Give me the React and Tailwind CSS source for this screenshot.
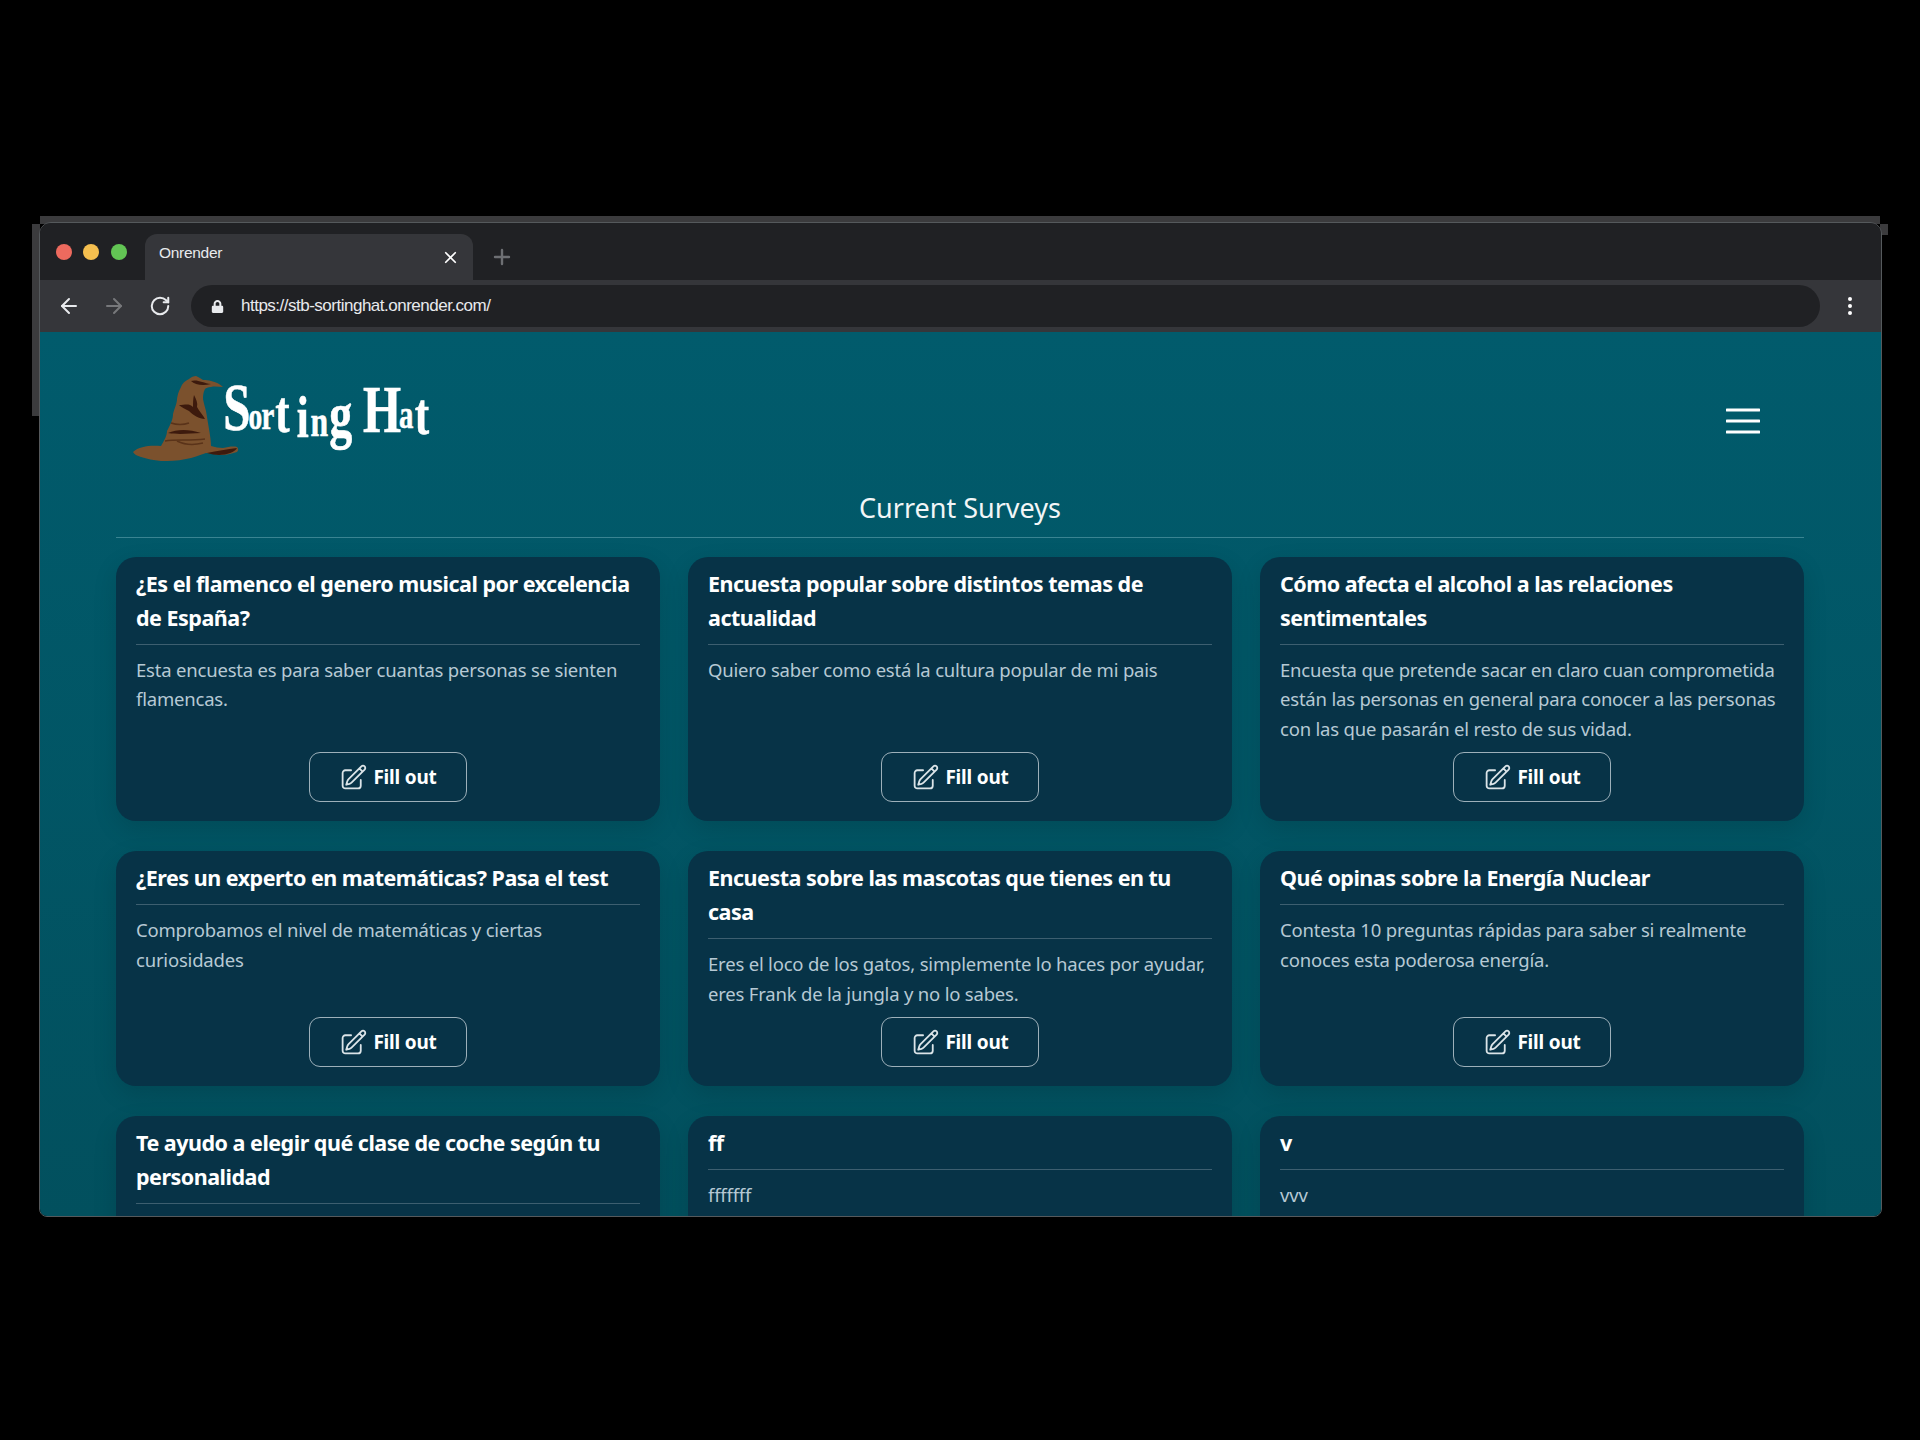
import { ArrowLeft, ArrowRight, RotateCw, X, Plus } from 'lucide-react';
import { FaLock } from 'react-icons/fa';
import { HiOutlinePencilSquare } from 'react-icons/hi2';

const surveys = [
  { title: '¿Es el flamenco el genero musical por excelencia de España?', text: 'Esta encuesta es para saber cuantas personas se sienten flamencas.' },
  { title: 'Encuesta popular sobre distintos temas de actualidad', text: 'Quiero saber como está la cultura popular de mi pais' },
  { title: 'Cómo afecta el alcohol a las relaciones sentimentales', text: 'Encuesta que pretende sacar en claro cuan comprometida están las personas en general para conocer a las personas con las que pasarán el resto de sus vidad.' },
  { title: '¿Eres un experto en matemáticas? Pasa el test', text: 'Comprobamos el nivel de matemáticas y ciertas curiosidades' },
  { title: 'Encuesta sobre las mascotas que tienes en tu casa', text: 'Eres el loco de los gatos, simplemente lo haces por ayudar, eres Frank de la jungla y no lo sabes.' },
  { title: 'Qué opinas sobre la Energía Nuclear', text: 'Contesta 10 preguntas rápidas para saber si realmente conoces esta poderosa energía.' },
  { title: 'Te ayudo a elegir qué clase de coche según tu personalidad', text: '' },
  { title: 'ff', text: 'fffffff' },
  { title: 'v', text: 'vvv' },
];

const Logo = () => (
  <svg width="330" height="100" viewBox="18 20 330 100" className="block">
    {/* hat */}
    <path d="M22 103 C28 97 40 96 50 97 C54 90 56 86 56 82 C60 74 62 70 62 65 C64 58 66 54 66 50 C67 44 68 42 70 38 C72 33 76 31 78 30 C80 28 83 27 85 27 C88 28 90 30 92 31 C95 31 98 31 100 32 C105 33 109 35 112 38 C108 38 104 37 100 38 C97 38 95 39 94 40 C92 44 92 47 92 50 C93 55 94 58 95 62 C96 68 97 74 98 80 C99 86 100 92 100 97 C104 98 108 99 112 99 C117 98 122 97 126 98 C128 100 127 102 126 103 C120 105 115 106 110 106 C105 106 100 104 95 104 C88 106 82 109 75 110 C66 112 58 112 50 112 C42 111 36 110 30 108 C26 107 23 105 22 103 Z" fill="#7b512d" />
    <path d="M83 46 C85 50 87 54 86 58 C88 62 92 66 94 70 C88 70 82 66 78 62 C74 60 70 58 68 56 C74 56 78 54 82 58 C82 54 82 50 83 46 Z M57 84 C66 80 78 80 90 84 C80 84 70 86 57 84 Z M96 104 C106 102 116 100 126 99 C124 103 116 106 108 106 C104 106 100 105 96 104 Z M80 32 C86 30 92 34 100 35 C92 37 84 36 80 32 Z" fill="#3d1a0d" />
    <path d="M54 92 C64 90 78 92 94 90 M60 74 C66 76 72 76 78 74 M66 92 C74 96 84 96 92 94" stroke="#5a3319" strokeWidth="1.4" fill="none" />
    {/* wordmark */}
    <text transform="scale(0.72 1)" fontFamily="Liberation Serif, serif" fontWeight="700" fill="#ffffff" stroke="#ffffff" strokeWidth="0.6">
      <tspan x="156" y="81" fontSize="68">S</tspan>
      <tspan x="191" y="80" fontSize="38">o</tspan>
      <tspan x="209" y="80" fontSize="40">r</tspan>
      <tspan x="228" y="83" fontSize="60">t</tspan>
      <tspan x="258" y="88" fontSize="60">i</tspan>
      <tspan x="277" y="87" fontSize="44">n</tspan>
      <tspan x="303" y="87" fontSize="64">g</tspan>
      <tspan x="350" y="83" fontSize="68">H</tspan>
      <tspan x="400" y="79" fontSize="40">a</tspan>
      <tspan x="422" y="85" fontSize="60">t</tspan>
    </text>
  </svg>
);

const SurveyCard = ({ title, text }) => (
  <div className="flex flex-col rounded-[20px] bg-[#073347] px-[20px] pt-[10px] pb-[19px] shadow-[0_8px_24px_rgba(0,0,0,0.12)]">
    <h3 className="border-b border-[#3d5f70] pb-[9px] text-[21.5px] leading-[34px] font-bold tracking-[-0.5px] text-white">{title}</h3>
    <p className="mt-[10px] mb-[9px] min-h-[59px] text-[18.5px] leading-[29.4px] tracking-[-0.2px] text-[#b6c9d4]">{text}</p>
    <button className="mx-auto mt-auto flex h-[50px] w-[158px] items-center justify-center gap-[5px] rounded-[11px] border-[1.5px] border-[#9db0ba] text-[19px] font-bold tracking-[-0.2px] text-white">
      <HiOutlinePencilSquare size={29} className="text-[#dbe4e8]" />
      Fill out
    </button>
  </div>
);

const App = () => (
  <div className="relative h-[1440px] w-[1920px] overflow-hidden bg-black pt-[222px] pl-[39px] font-['Noto_Sans',sans-serif]">
    {/* stray edges of the window capture */}
    <div className="absolute top-[216px] left-[40px] h-[8px] w-[1840px] bg-[#3b3b3d]" />
    <div className="absolute top-[224px] left-[32px] h-[192px] w-[8px] bg-[#3b3b3d]" />
    <div className="absolute top-[224px] left-[1880px] h-[11px] w-[8px] bg-[#3b3b3d]" />

    <div className="relative flex h-[995px] w-[1843px] flex-col overflow-hidden rounded-t-[12px] rounded-b-[8px] border border-[#55595c]">
      {/* tab bar */}
      <div className="flex h-[57px] items-end bg-[#202124] pl-[16px]">
        <div className="flex h-[57px] items-center self-start">
          <span className="h-[16px] w-[16px] rounded-full bg-[#ed6a5e]" />
          <span className="ml-[11px] h-[16px] w-[16px] rounded-full bg-[#f5bf4f]" />
          <span className="ml-[12px] h-[16px] w-[16px] rounded-full bg-[#62c554]" />
        </div>
        <div className="ml-[18px] flex h-[46px] w-[328px] items-start justify-between rounded-t-[12px] bg-[#35363a] pt-[7px] pr-[13px] pl-[14px] font-['Liberation_Sans',sans-serif] text-[15.5px] tracking-[-0.3px] text-[#e8eaed]">
          <span>Onrender</span>
          <X size={19} strokeWidth={2.2} className="mt-[7px] text-white" />
        </div>
        <Plus size={24} strokeWidth={2.4} className="mb-[11px] ml-[17px] text-[#6d6f73]" />
      </div>

      {/* toolbar */}
      <div className="flex h-[52px] items-center bg-[#35363a] pl-[17px] text-white">
        <ArrowLeft size={24} strokeWidth={2} className="text-[#e8eaed]" />
        <ArrowRight size={24} strokeWidth={2} className="ml-[21px] text-[#77787b]" />
        <RotateCw size={22} strokeWidth={2.2} className="ml-[23px] text-[#e8eaed]" />
        <div className="ml-[20px] flex h-[42px] w-[1629px] items-center rounded-full bg-[#202124] pl-[20px] font-['Liberation_Sans',sans-serif] text-[17px] tracking-[-0.5px] text-[#e8eaed]">
          <FaLock size={13} className="text-[#e8eaed]" />
          <span className="ml-[17px]">https://stb-sortinghat.onrender.com/</span>
        </div>
        <div className="ml-[28px] flex flex-col gap-[3px]">
          <span className="h-[4px] w-[4px] rounded-full bg-white" />
          <span className="h-[4px] w-[4px] rounded-full bg-white" />
          <span className="h-[4px] w-[4px] rounded-full bg-white" />
        </div>
      </div>

      {/* page */}
      <div className="flex-1 overflow-hidden bg-gradient-to-b from-[#015b6c] to-[#02505e] pr-[77px] pl-[76px]">
        <div className="flex h-[152px] items-start justify-between">
          <div className="mt-[37px] ml-[13px]"><Logo /></div>
          <svg width="34" height="26" viewBox="0 0 34 26" className="mt-[76px] mr-[44px]">
            <path d="M1 2 H33 M1 13 H33 M1 24 H33" stroke="#ffffff" strokeWidth="3" strokeLinecap="round" />
          </svg>
        </div>
        <h2 className="border-b border-[#3a8492] pb-[5px] text-center text-[27px] leading-[48px] text-[#f2f6f7]">Current Surveys</h2>
        <div className="mt-[19px] grid grid-cols-3 gap-x-[28px] gap-y-[30px]">
          {surveys.map((s) => (
            <SurveyCard key={s.title} title={s.title} text={s.text} />
          ))}
        </div>
      </div>
    </div>
  </div>
);

export default App;
